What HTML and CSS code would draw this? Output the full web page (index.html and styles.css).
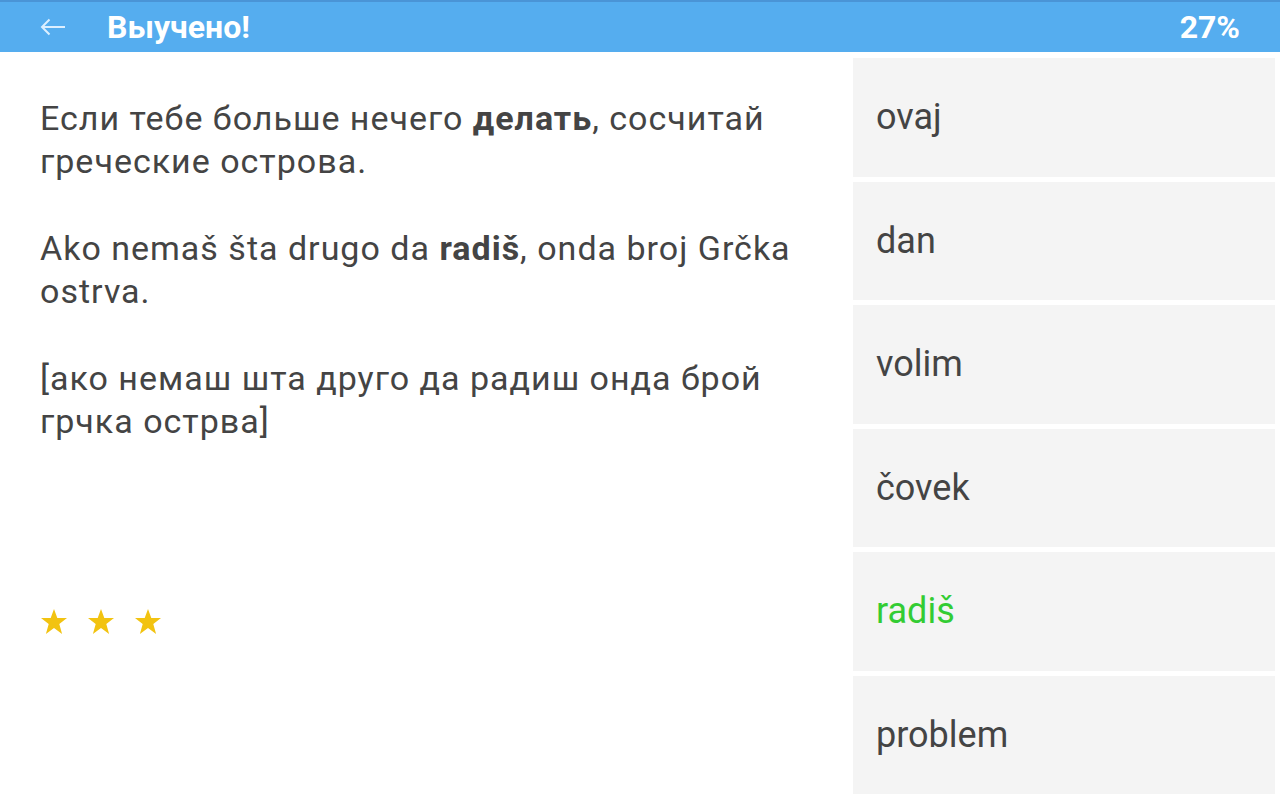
FILE: index.html
```html
<!DOCTYPE html>
<html>
<head>
  <meta charset="UTF-8">
  <title>Выучено!</title>
  <link rel="stylesheet" href="styles.css">
</head>
<body>

<div class="topbar">
  <svg class="back" width="26" height="18" viewBox="0 0 26 18">
    <path d="M25 9H2M9.5 1.5L2 9l7.5 7.5" fill="none" stroke="#dcefff" stroke-width="2"/>
  </svg>
  <span class="title">Выучено!</span>
  <span class="percent">27%</span>
</div>

<div class="main">
  <div class="sentence">
    <p>Если тебе больше нечего <b>делать</b>, сосчитай греческие острова.</p>
    <p>Ako nemaš šta drugo da <b>radiš</b>, onda broj Grčka ostrva.</p>
    <p>[ако немаш шта друго да радиш онда брой грчка острва]</p>

    <div class="stars">
      <svg width="28" height="27" viewBox="0 0 28 27"><polygon points="14,1 17.3,10 27,10 19.3,16 22.1,26 14,20 5.9,26 8.7,16 1,10 10.7,10" fill="#f2c311"/></svg>
      <svg width="28" height="27" viewBox="0 0 28 27"><polygon points="14,1 17.3,10 27,10 19.3,16 22.1,26 14,20 5.9,26 8.7,16 1,10 10.7,10" fill="#f2c311"/></svg>
      <svg width="28" height="27" viewBox="0 0 28 27"><polygon points="14,1 17.3,10 27,10 19.3,16 22.1,26 14,20 5.9,26 8.7,16 1,10 10.7,10" fill="#f2c311"/></svg>
    </div>
  </div>

  <div class="choices">
    <div class="choice">ovaj</div>
    <div class="choice">dan</div>
    <div class="choice">volim</div>
    <div class="choice">čovek</div>
    <div class="choice correct">radiš</div>
    <div class="choice">problem</div>
  </div>
</div>

</body>
</html>
```

FILE: styles.css
```css
html, body {
  margin: 0;
  height: 100%;
}
body {
  background: #ffffff;
  color: #444444;
  font-family: Roboto, "Noto Sans", sans-serif;
  display: flex;
  flex-direction: column;
  overflow: hidden;
}
.topbar {
  height: 50px;
  flex: none;
  background: #55adef;
  border-top: 2px solid #4a94d6;
  display: flex;
  align-items: center;
  padding: 0 40px;
  color: #ffffff;
}
.back {
  display: block;
  margin-right: 41px;
}
.title {
  font-size: 32px;
  font-weight: bold;
  flex: 1;
}
.percent {
  font-size: 32px;
  font-weight: bold;
}
.main {
  flex: 1;
  display: flex;
  min-height: 0;
}
.sentence {
  flex: 1;
  padding: 45px 40px 0 40px;
  font-size: 34px;
  letter-spacing: 1px;
  line-height: 43px;
}
.sentence p {
  margin: 0 0 44px 0;
}
.sentence b {
  font-weight: bold;
}
.stars {
  display: flex;
  gap: 19px;
  margin-top: 165px;
}
.stars svg {
  display: block;
}
.choices {
  width: 422px;
  flex: none;
  display: flex;
  flex-direction: column;
  gap: 5px;
  padding: 6px 5px 6px 0;
}
.choice {
  flex: 1;
  background: #f4f4f4;
  display: flex;
  align-items: center;
  padding-left: 23px;
  font-size: 36px;
  color: #444444;
}
.correct {
  color: #33cc33;
}
```
